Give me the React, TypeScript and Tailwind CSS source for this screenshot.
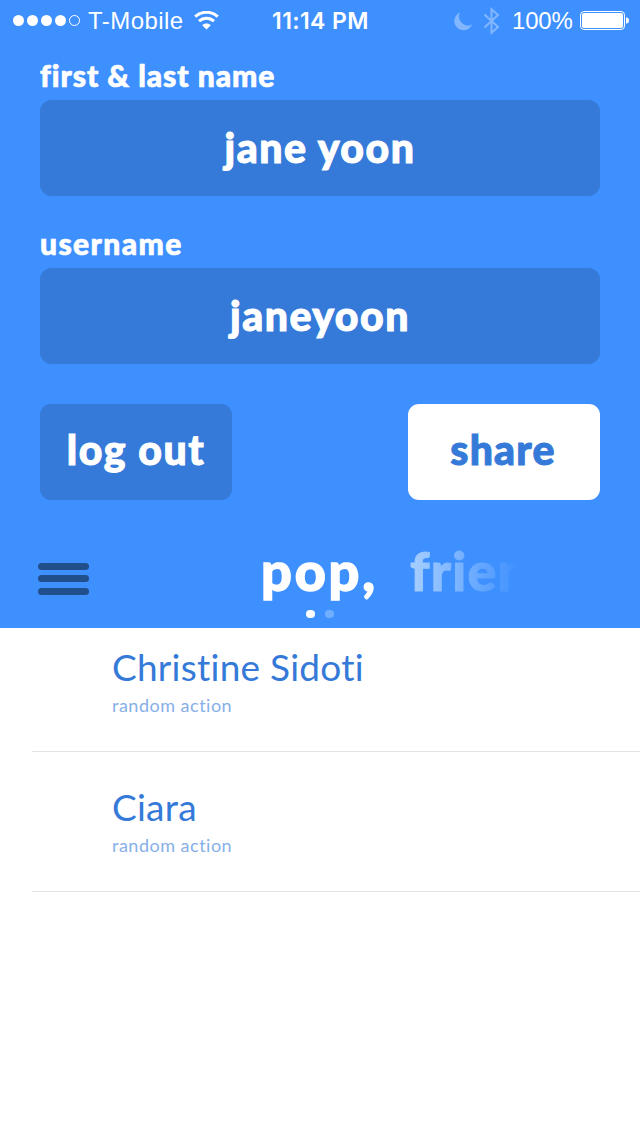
import React from "react";

function StatusBar() {
  return (
    <div className="flex h-10 items-center pt-[1px] pl-[13px] font-['Liberation_Sans',sans-serif] text-[24px] leading-[38px] text-white">
      <div className="flex w-[75px] shrink-0 items-center gap-[3px]">
        <span className="size-[11px] rounded-full bg-white" />
        <span className="size-[11px] rounded-full bg-white" />
        <span className="size-[11px] rounded-full bg-white" />
        <span className="size-[11px] rounded-full bg-white" />
        <span className="size-[11px] rounded-full border border-white" />
      </div>
      <span className="w-[106px] shrink-0 whitespace-nowrap pt-px tracking-[0.45px]">T-Mobile</span>
      <svg className="h-[19px] w-[25px] shrink-0" viewBox="0 0 25 19" fill="none" stroke="white">
        <path d="M1.2 5.6C7.6 -.2 17.4 -.2 23.8 5.6" strokeWidth="3" />
        <path d="M5 10.2C9.4 6.2 15.6 6.2 20 10.2" strokeWidth="3" />
        <path d="M12.5 18.5L8.2 14.2C10.5 12 14.5 12 16.8 14.2Z" fill="white" stroke="none" />
      </svg>
      <span className="ml-[53px] w-[181px] shrink-0 pt-px font-['Inter',sans-serif] text-[23px] font-semibold tracking-[0.4px] whitespace-nowrap">11:14 PM</span>
      <svg className="h-5 w-5 shrink-0" viewBox="0 0 20 20">
        <path d="M7 1.5A9.2 9.2 0 1 0 19 13.6A9 9 0 0 1 7 1.5Z" fill="#82b7ff" />
      </svg>
      <svg className="ml-[10px] h-7 w-[17px] shrink-0" viewBox="0 0 17 28" fill="none" stroke="#82b7ff" strokeWidth="2">
        <path d="M1.5 7.5L15 20L8.5 25.8V2.2L15 8L1.5 20.5" />
      </svg>
      <span className="ml-[12px] w-[68px] shrink-0 pt-px tracking-[-0.2px] whitespace-nowrap">100%</span>
      <svg className="h-5 w-[49px] shrink-0" viewBox="0 0 49 20">
        <rect x=".5" y=".5" width="44" height="18" rx="3.5" fill="none" stroke="white" />
        <rect x="2" y="2" width="41" height="15" rx="2" fill="white" />
        <path d="M46 6.2Q49 6.8 49 9.5T46 12.8Z" fill="white" />
      </svg>
    </div>
  );
}

const people = ["Christine Sidoti", "Ciara"];

export default function App() {
  return (
    <main className="h-[1136px] w-[640px] overflow-hidden bg-white font-['Lato',sans-serif]">
      <section className="flex h-[628px] flex-col bg-[#3e90ff] text-white">
        <StatusBar />
        <div className="px-10 pt-4">
          <label className="block h-11 text-[30px] leading-[38px] font-black tracking-[0.95px] whitespace-nowrap [-webkit-text-stroke:0.7px_currentColor]">first &amp; last name</label>
          <div className="flex h-24 justify-center rounded-[11px] border border-[#367bd9] bg-[#357ad8] text-[41px] leading-[94px] font-black tracking-[1.5px] [-webkit-text-stroke:1px_currentColor]">
            <span>jane yoon</span>
          </div>
          <label className="mt-7 block h-11 text-[30px] leading-[38px] font-black tracking-[1.4px] [-webkit-text-stroke:0.7px_currentColor]">username</label>
          <div className="flex h-24 justify-center rounded-[11px] border border-[#367bd9] bg-[#357ad8] text-[41px] leading-[94px] font-black tracking-[1.5px] [-webkit-text-stroke:1px_currentColor]">
            <span>janeyoon</span>
          </div>
          <div className="mt-10 flex justify-between text-[41px] leading-[92px] font-black [-webkit-text-stroke:1px_currentColor]">
            <button className="h-24 w-48 rounded-[11px] bg-[#357ad8] pb-1 tracking-[1.5px]">log out</button>
            <button className="h-24 w-48 rounded-[11px] bg-white pr-0.5 pb-1 tracking-[1.2px] text-[#357ad8]">share</button>
          </div>
        </div>
        <nav className="flex h-32 pt-[42px] pl-[38px]">
          <div className="flex w-[51px] shrink-0 flex-col gap-[5px] pt-[21px]">
            <span className="h-[7px] rounded-full bg-[#204f8b]" />
            <span className="h-[7px] rounded-full bg-[#204f8b]" />
            <span className="mt-[1px] h-[7px] rounded-full bg-[#204f8b]" />
          </div>
          <div className="ml-[172px]">
            <div className="flex h-[68px] text-[54px] leading-[58px] font-black tracking-[2.8px] whitespace-nowrap">
              <span className="w-[149px] [-webkit-text-stroke:1.4px_currentColor]">pop,</span>
              <span className="h-[62px] w-[108px] bg-linear-to-r from-[#a8cfff] to-[#3e90ff] bg-clip-text tracking-[1.2px] text-transparent [-webkit-text-stroke:1px_transparent]">friends</span>
            </div>
            <div className="flex gap-[10px] pl-[45px]">
              <span className="h-[8px] w-[9px] rounded-full bg-white" />
              <span className="h-[8px] w-[9px] rounded-full bg-[#72aeff]" />
            </div>
          </div>
        </nav>
      </section>
      <ul>
        {people.map((name) => (
          <li key={name} className="ml-8 h-[140px] border-b border-[#e2e4e6] pl-20 whitespace-nowrap first:-mt-4">
            <p className="pt-[30px] text-[37px] leading-[50px] tracking-[0.25px] text-[#357ad8]">{name}</p>
            <p className="text-[18px] leading-[26px] tracking-[0.5px] text-[#86afe8]">random action</p>
          </li>
        ))}
      </ul>
    </main>
  );
}
